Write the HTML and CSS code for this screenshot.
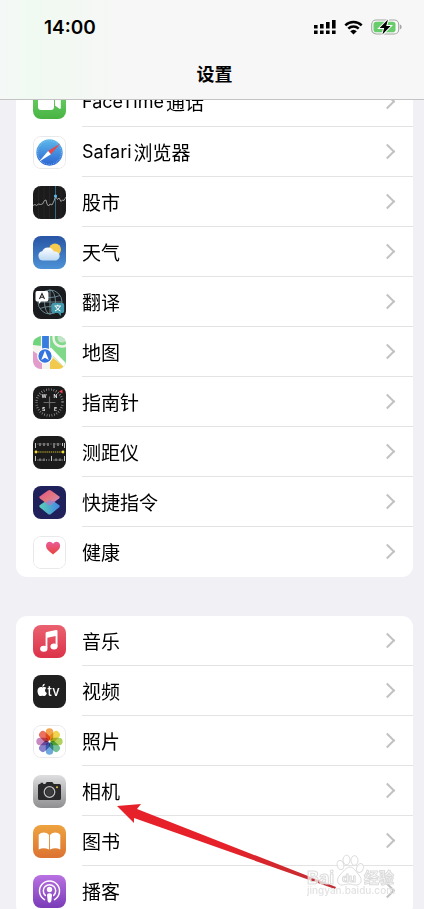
FILE: index.html
```html
<!DOCTYPE html>
<html lang="zh-CN">
<head>
    <meta charset="UTF-8">
    <meta name="viewport" content="width=device-width, initial-scale=1">
    <title>设置</title>
    <link rel="stylesheet" href="styles.css">
</head>
<body>
    <header class="header">
        <div class="status">
            <span class="time">14:00</span>
            <div class="status-icons">
                <svg class="signal" width="22" height="16" viewBox="0 0 22 16">
                    <path d="M0 6h3.600v3.400H0zM6 5h3.600v4.400H6zM12 3h3.600v6.400H12zM18 1h3.600v8.400H18z"/>
                    <path d="M0 11.600h3.600V15H0zM6 11.600h3.600V15H6zM12 11.600h3.600V15H12zM18 11.600h3.600V15H18z"/>
                </svg>
                <svg class="wifi" width="19" height="15" viewBox="0 0 19 15">
                    <path d="M1.300 5.300a12 12 0 0 1 16.400 0M4.300 8.600a7.600 7.600 0 0 1 10.400 0" fill="none" stroke="#000" stroke-width="2.500"/>
                    <path d="M9.500 14.600L6.200 11.200a4.800 4.800 0 0 1 6.600 0z"/>
                </svg>
                <svg class="battery" width="31" height="16" viewBox="0 0 31 16">
                    <rect x=".7" y="1" width="27" height="14" rx="4.500" fill="#fafafa" stroke="#a3a7a3" stroke-width="1.100"/>
                    <rect x="2.500" y="2.800" width="22" height="10.400" rx="2.800" fill="#66cc6c"/>
                    <path d="M28.900 5.600q1.800.4 1.800 2.400t-1.800 2.400z" fill="#a3a7a3"/>
                    <path d="M17 .6L8.600 9h4.600l-1.800 6.600L19.600 7h-4.400z" stroke="#fff" stroke-width="2" paint-order="stroke"/>
                </svg>
            </div>
        </div>
        <h1 class="title">设置</h1>
    </header>

    <main class="settings">
        <ul class="group">
            <li><a href="#">
                <svg class="icon" viewBox="0 0 33 33">
                    <defs><linearGradient id="gFace" x2="0" y2="1"><stop offset="0" stop-color="#75d873"/><stop offset="1" stop-color="#48b343"/></linearGradient></defs>
                    <rect width="33" height="33" fill="url(#gFace)"/>
                    <rect x="5" y="9" width="16" height="15" rx="3" fill="#fff"/>
                    <path d="M22 14l4-3.400q1.800-1 1.800 1v10q0 2-1.800 1L22 19.400z" fill="#fff"/>
                </svg>
                <span class="name"><b>FaceTime</b>通话</span>
            </a></li>
            <li><a href="#">
                <svg class="icon line" viewBox="0 0 33 33">
                    <defs><linearGradient id="gSaf" x2="0" y2="1"><stop offset="0" stop-color="#5cb8ea"/><stop offset="1" stop-color="#2c64d2"/></linearGradient></defs>
                    <rect width="33" height="33" fill="#fff"/>
                    <circle cx="16.500" cy="16.500" r="14" fill="url(#gSaf)"/>
                    <circle cx="16.500" cy="16.500" r="12.600" fill="none" stroke="#8cc6f2" stroke-width="1.200" stroke-dasharray=".6 1.300"/>
                    <path d="M28 7L15 15l3 3.400z" fill="#e5484c"/>
                    <path d="M5 26.500L15 15l3 3.400z" fill="#fff"/>
                </svg>
                <span class="name"><b>Safari</b>浏览器</span>
            </a></li>
            <li><a href="#">
                <svg class="icon" viewBox="0 0 33 33">
                    <rect width="33" height="33" fill="#1b1b1c"/>
                    <path d="M5.500 0v33M11 0v33M16.500 0v33M28 0v33" stroke="#28282a" stroke-width=".7"/>
                    <path d="M22.500 0v33" stroke="#2e6c86"/>
                    <path d="M0 19.500l2-1 1.500 1 2-1.500 2 .5 2-.5 2-3.500 1.500-.5 1 4 1.500 2 1.500-2 2 1 2-4 1.500-4.500 2 3 1.500-1.500 2 3.500 1.500-1.500 1.500.5L33 11" fill="none" stroke="#bdbdbd" stroke-width=".8"/>
                    <circle cx="22.500" cy="10" r="1.600" fill="#5abbe8"/>
                </svg>
                <span class="name">股市</span>
            </a></li>
            <li><a href="#">
                <svg class="icon" viewBox="0 0 33 33">
                    <defs>
                        <linearGradient id="gSky" x2="0" y2="1"><stop offset="0" stop-color="#2855a4"/><stop offset="1" stop-color="#4d91d6"/></linearGradient>
                        <linearGradient id="gCloud" x2="0" y2="1"><stop offset="0" stop-color="#fff"/><stop offset="1" stop-color="#bcd9f4"/></linearGradient>
                    </defs>
                    <rect width="33" height="33" fill="url(#gSky)"/>
                    <circle cx="22" cy="13.500" r="6" fill="#f6cb50"/>
                    <path d="M10 24.500a4.700 4.700 0 0 1-.8-9.300 6.200 6.200 0 0 1 11.600.4 4.600 4.600 0 0 1 2.400 8.900z" fill="url(#gCloud)"/>
                </svg>
                <span class="name">天气</span>
            </a></li>
            <li><a href="#">
                <svg class="icon" viewBox="0 0 33 33">
                    <rect width="33" height="33" fill="#1a1b1e"/>
                    <g fill="none" stroke="#6f8f98" stroke-width=".9">
                        <circle cx="17" cy="16" r="12"/>
                        <ellipse cx="17" cy="16" rx="5.500" ry="12"/>
                        <path d="M17 4v24M5 16h24M7 9.500q10 4 20 0M7 22.500q10-4 20 0"/>
                    </g>
                    <path d="M4 5h9.500q2 0 2 2v6.500q0 2-2 2H8l-2 2.500v-2.500H4q-1.500 0-1.500-2V7Q2.500 5 4 5z" fill="#fff"/>
                    <path d="M6.500 13L9 7.500l2.500 5.500M7.500 11.300h3" fill="none" stroke="#222" stroke-width="1.100"/>
                    <path d="M20 17h9.500q1.700 0 1.700 2v6q0 2-1.700 2H28v3l-3-3h-5q-1.800 0-1.800-2v-6q0-2 1.800-2z" fill="#4299ab"/>
                    <path d="M21.500 20h6.500M24.700 18.700V20M22.500 20.300q1.500 3.500 5 4.700M27 20.300q-1.500 3.500-5 4.700" fill="none" stroke="#fff"/>
                </svg>
                <span class="name">翻译</span>
            </a></li>
            <li><a href="#">
                <svg class="icon" viewBox="0 0 33 33">
                    <rect width="33" height="33" fill="#f4f3ee"/>
                    <path d="M15 0h18v33L15 15z" fill="#80d98a"/>
                    <path d="M0 4l7-4h2v10L0 9z" fill="#6ed47c"/>
                    <path d="M0 15l9 6v12H0z" fill="#e19ccc"/>
                    <path d="M17 19l16 14H17z" fill="#f0c94d"/>
                    <circle cx="29" cy="2" r="8.500" fill="none" stroke="#f2f2ec" stroke-width="2.500"/>
                    <circle cx="29" cy="2" r="4.500" fill="#c4e4c9"/>
                    <path d="M16.500 13L33 30" stroke="#fff" stroke-width="4"/>
                    <path d="M9 0h7v17H9z" fill="#377cdf"/>
                    <path d="M8.500 0v17M16.500 0v15" stroke="#fff" stroke-width="1.200"/>
                    <circle cx="12" cy="20" r="7.300" fill="#3474df" stroke="#fff" stroke-width="1.300"/>
                    <path d="M12 14.500l3.800 9.500-3.800-2.300L8.200 24z" fill="#fff"/>
                </svg>
                <span class="name">地图</span>
            </a></li>
            <li><a href="#">
                <svg class="icon" viewBox="0 0 33 33">
                    <rect width="33" height="33" fill="#1b1b1c"/>
                    <circle cx="16.500" cy="16.500" r="13" fill="none" stroke="#a9a9aa" stroke-width="2.400" stroke-dasharray=".6 1.900"/>
                    <path d="M16.500 10.500v12M10.500 16.500h12" stroke="#69696b" stroke-width="1.200"/>
                    <path d="M26 5.500l3.500-2v4z" fill="#f0404a"/>
                    <g class="compass-text">
                        <text x="8.500" y="12">W</text>
                        <text x="20.500" y="12">N</text>
                        <text x="9" y="25">S</text>
                        <text x="21" y="25">E</text>
                    </g>
                </svg>
                <span class="name">指南针</span>
            </a></li>
            <li><a href="#">
                <svg class="icon" viewBox="0 0 33 33">
                    <rect width="33" height="33" fill="#1b1b1c"/>
                    <path d="M2.500 7v5M7 7v3M11 7v3M15 7v3M21 7v5M25 7v3M29.500 7v3M31.500 7v5" stroke="#dcdcdc" stroke-width=".9"/>
                    <path d="M5 7v2M9 7v2M13 7v2M18 7v2M23 7v2M27 7v2" stroke="#777" stroke-width=".7"/>
                    <path d="M2.500 20v5M7 22.500V25M11 22.500V25M18.500 20v5M23 22.500V25M27 22.500V25M31.500 20v5" stroke="#dcdcdc" stroke-width=".9"/>
                    <path d="M5 23v2M9 23v2M13.500 23v2M16 23v2M21 23v2M25 23v2M29 23v2" stroke="#999" stroke-width=".7"/>
                    <path d="M3 16h27" stroke="#c9b42e" stroke-width="1" stroke-dasharray="1.400 .7"/>
                    <circle cx="3" cy="16" r="1.400" fill="#f2dc3c"/>
                    <circle cx="30" cy="16" r="1.400" fill="#f2dc3c"/>
                </svg>
                <span class="name">测距仪</span>
            </a></li>
            <li><a href="#">
                <svg class="icon" viewBox="0 0 33 33">
                    <defs>
                        <linearGradient id="gTop" x2="1" y2="1"><stop offset="0" stop-color="#e7508a"/><stop offset=".5" stop-color="#e2767e"/><stop offset="1" stop-color="#c58fd8"/></linearGradient>
                        <linearGradient id="gBot" x2="1" y2="0"><stop offset="0" stop-color="#5bd0b4"/><stop offset="1" stop-color="#4387e6"/></linearGradient>
                    </defs>
                    <rect width="33" height="33" fill="#20215a"/>
                    <path d="M15 13.500q1.500-1 3 0l8 5.500q1.500 1.200 0 2.400l-8 6.500q-1.500 1-3 0l-8-6.500q-1.500-1.200 0-2.400z" fill="url(#gBot)"/>
                    <path d="M15 4.500q1.500-1 3 0l8 5.700q1.500 1.200 0 2.400l-8 6q-1.500 1-3 0l-8-6q-1.500-1.200 0-2.400z" fill="url(#gTop)"/>
                    <path d="M12.500 16.800l4-2.600 5.500 1.500-4 3q-1.500 1-3 0z" fill="#9a86c4"/>
                </svg>
                <span class="name">快捷指令</span>
            </a></li>
            <li><a href="#">
                <svg class="icon line" viewBox="0 0 33 33">
                    <defs><linearGradient id="gHeart" x2="0" y2="1"><stop offset="0" stop-color="#ea5c9a"/><stop offset="1" stop-color="#e8453c"/></linearGradient></defs>
                    <rect width="33" height="33" fill="#fff"/>
                    <path d="M20.300 18.500c-4-3-7.500-5.500-7.500-9.200 0-5 5.700-5.500 7.500-2 1.800-3.500 7.500-3 7.500 2 0 3.700-3.500 6.200-7.500 9.200z" fill="url(#gHeart)"/>
                </svg>
                <span class="name">健康</span>
            </a></li>
        </ul>

        <ul class="group">
            <li><a href="#">
                <svg class="icon" viewBox="0 0 33 33">
                    <defs><linearGradient id="gMusic" x2="0" y2="1"><stop offset="0" stop-color="#ea6270"/><stop offset="1" stop-color="#dc3249"/></linearGradient></defs>
                    <rect width="33" height="33" fill="url(#gMusic)"/>
                    <path d="M12.600 8.200q0-1 1-1.200l9.600-2q1.300-.2 1.300 1V21h-1.900V11l-8.200 1.700V23h-1.800z" fill="#fff"/>
                    <ellipse cx="10.800" cy="23.800" rx="3.700" ry="3" fill="#fff"/>
                    <ellipse cx="21" cy="21.500" rx="3.600" ry="3" fill="#fff"/>
                </svg>
                <span class="name">音乐</span>
            </a></li>
            <li><a href="#">
                <svg class="icon" viewBox="0 0 33 33">
                    <rect width="33" height="33" fill="#202021"/>
                    <path d="M9.600 12.400c1.400-.8 3-.5 3.800.7-2 1.300-1.700 4.100.5 5-.7 1.700-1.500 3-2.600 3-.8 0-1-.4-1.900-.4s-1.200.4-1.900.4c-1.700 0-3-3-3-5.200 0-3.300 2.700-4.500 5.100-3.500z" fill="#fff"/>
                    <path d="M9.300 11.800c0-1.600.9-2.700 2.400-3 .1 1.600-.9 2.900-2.400 3z" fill="#fff"/>
                    <text class="tv-text" x="14.500" y="21">tv</text>
                </svg>
                <span class="name">视频</span>
            </a></li>
            <li><a href="#">
                <svg class="icon line" viewBox="0 0 33 33">
                    <rect width="33" height="33" fill="#fff"/>
                    <g class="petals">
                        <rect x="12.500" y="2.500" width="8" height="13" rx="4" fill="#f29a3c"/>
                        <rect x="12.500" y="2.500" width="8" height="13" rx="4" fill="#ecd03e" transform="rotate(45 16.500 16.500)"/>
                        <rect x="12.500" y="2.500" width="8" height="13" rx="4" fill="#a9cc4a" transform="rotate(90 16.500 16.500)"/>
                        <rect x="12.500" y="2.500" width="8" height="13" rx="4" fill="#62bb8a" transform="rotate(135 16.500 16.500)"/>
                        <rect x="12.500" y="2.500" width="8" height="13" rx="4" fill="#5f9fd8" transform="rotate(180 16.500 16.500)"/>
                        <rect x="12.500" y="2.500" width="8" height="13" rx="4" fill="#7b74c4" transform="rotate(225 16.500 16.500)"/>
                        <rect x="12.500" y="2.500" width="8" height="13" rx="4" fill="#c27cb8" transform="rotate(270 16.500 16.500)"/>
                        <rect x="12.500" y="2.500" width="8" height="13" rx="4" fill="#e8604f" transform="rotate(315 16.500 16.500)"/>
                    </g>
                </svg>
                <span class="name">照片</span>
            </a></li>
            <li><a href="#">
                <svg class="icon" viewBox="0 0 33 33">
                    <defs><linearGradient id="gCam" x2="0" y2="1"><stop offset="0" stop-color="#dedee0"/><stop offset="1" stop-color="#8f8f92"/></linearGradient></defs>
                    <rect width="33" height="33" fill="url(#gCam)"/>
                    <path d="M6.500 9h5.700l1.500-2h5.600l1.500 2h5.700q1.500 0 1.500 1.500v13q0 1.500-1.500 1.500h-20Q5 25 5 23.500v-13Q5 9 6.500 9z" fill="#29292b"/>
                    <path d="M7.500 7.800h2.700V9H7.500z" fill="#29292b"/>
                    <circle cx="16.500" cy="17" r="5.300" fill="none" stroke="#c3c3c6" stroke-width="1.200"/>
                    <circle cx="16.500" cy="17" r="3.700" fill="#3c3c3f"/>
                    <circle cx="24" cy="12.300" r="1" fill="#f1c64a"/>
                </svg>
                <span class="name">相机</span>
            </a></li>
            <li><a href="#">
                <svg class="icon" viewBox="0 0 33 33">
                    <defs><linearGradient id="gBook" x2="0" y2="1"><stop offset="0" stop-color="#eda33f"/><stop offset="1" stop-color="#dd7232"/></linearGradient></defs>
                    <rect width="33" height="33" fill="url(#gBook)"/>
                    <path d="M16.100 10q-1.500-2.500-5-2.500T5.700 9.700v14.800q4.800-2.300 10.400 0zM17 10q1.500-2.500 5-2.500t5.300 2.200v14.800q-4.700-2.300-10.300 0z" fill="#fff"/>
                </svg>
                <span class="name">图书</span>
            </a></li>
            <li><a href="#">
                <svg class="icon" viewBox="0 0 33 33">
                    <defs><linearGradient id="gPod" x2="0" y2="1"><stop offset="0" stop-color="#b971e2"/><stop offset="1" stop-color="#7a3bb8"/></linearGradient></defs>
                    <rect width="33" height="33" fill="url(#gPod)"/>
                    <path d="M11.500 24.600a10 10 0 1 1 10 0M12.300 20.400a6.200 6.200 0 1 1 8.400 0" fill="none" stroke="#fff" stroke-width="1.500" stroke-linecap="round"/>
                    <circle cx="16.500" cy="14.500" r="2.700" fill="#fff"/>
                    <path d="M14 20q0-1.800 2.500-1.800T19 20l-.7 6q-.3 1.700-1.800 1.700t-1.800-1.700z" fill="#fff"/>
                </svg>
                <span class="name">播客</span>
            </a></li>
        </ul>
    </main>

    <!-- 指向“相机”的箭头 -->
    <svg class="arrow" width="220" height="88" viewBox="0 0 220 88">
        <defs><linearGradient id="gArrow" x2="1" y2="0"><stop offset=".5" stop-color="#e62129"/><stop offset="1" stop-color="#bd3034"/></linearGradient></defs>
        <path d="M0 3L24 1L20 6L219 84L218 86L17 15L17 20z" fill="url(#gArrow)"/>
    </svg>

    <!-- 水印 -->
    <svg class="watermark" width="92" height="46" viewBox="0 0 92 46">
        <g class="mark">
            <ellipse cx="33.500" cy="13" rx="3.300" ry="4.600" transform="rotate(-15 33.500 13)"/>
            <ellipse cx="39.500" cy="8" rx="3.500" ry="4.800"/>
            <ellipse cx="47.500" cy="8.500" rx="3.500" ry="4.800"/>
            <ellipse cx="53" cy="16" rx="3.300" ry="4.600" transform="rotate(20 53 16)"/>
            <path d="M43 15c4 0 6 5 9 8 4 5 2 10-3 10-3 0-4-1-7-1s-4 1-7 1c-5 0-6-6-2-10 3-3 6-8 10-8z"/>
            <text class="mark-logo" x="0" y="32">Bai</text>
            <text class="mark-du" x="35" y="30">du</text>
            <text class="mark-cn" x="57" y="31">经验</text>
        </g>
        <text class="mark-url" x="0" y="42">jingyan.baidu.com</text>
    </svg>
</body>
</html>
```

FILE: styles.css
```css
* {
    margin: 0;
    padding: 0;
    list-style: none;
    box-sizing: border-box;
}
body {
    height: 100vh;
    overflow: hidden;
    position: relative;
    background: #f0f0f5;
    color: #000;
    font-family: Inter, "Noto Sans CJK SC", sans-serif;
}

/* 顶部栏 */
.header {
    position: fixed;
    z-index: 2;
    top: 0;
    left: 0;
    right: 0;
    height: 100px;
    padding: 16px 22px 0 27px;
    border-bottom: 1px solid #c3c3c4;
    background: linear-gradient(90deg, #f5f8f7 0, #f0faf1 32px, #f3f8f3 72px, #f7f7f7 130px);
}
.status {
    display: flex;
    justify-content: space-between;
    align-items: center;
    height: 22px;
    padding-left: 17px;
}
.time {
    font-size: 19px;
    font-weight: 600;
}
.status-icons {
    display: flex;
    align-items: center;
    gap: 8px;
}
.title {
    margin-top: 24px;
    line-height: 26px;
    font-size: 18px;
    font-weight: 700;
    text-align: center;
}

/* 列表 */
.settings {
    height: 100vh;
    overflow: hidden;
    padding: 77px 11px 0 16px;
}
.group {
    margin-bottom: 39px;
    background: #fff;
    border-radius: 11px;
    overflow: hidden;
}
.group a {
    display: flex;
    align-items: center;
    height: 50px;
    padding-left: 17px;
    color: #000;
    text-decoration: none;
}
.icon {
    flex: none;
    width: 33px;
    height: 33px;
    margin-right: 16px;
    border-radius: 8px;
}
.icon.line {
    border: 1px solid #e9e9eb;
}
.name {
    flex: 1;
    display: flex;
    align-items: center;
    height: 50px;
    border-bottom: 1px solid #e3e3e5;
    font-size: 19px;
}
.name b {
    margin-right: 2px;
    font-size: 18px;
    font-weight: 400;
}
.name::after {
    content: "";
    width: 9px;
    height: 9px;
    margin-left: auto;
    margin-right: 20px;
    border-top: 2px solid #c2c2c5;
    border-right: 2px solid #c2c2c5;
    transform: rotate(45deg);
}
.group li:last-child .name {
    border-bottom-color: transparent;
}

/* 图标里的文字 */
.compass-text {
    fill: #e6e6e6;
    font-size: 5px;
    font-weight: 700;
}
.tv-text {
    fill: #fff;
    font-size: 13px;
    font-weight: 500;
}
.petals rect {
    mix-blend-mode: multiply;
    opacity: .9;
}

.arrow {
    position: absolute;
    z-index: 3;
    left: 117px;
    top: 803px;
}

/* 水印 */
.watermark {
    position: absolute;
    z-index: 4;
    right: 25px;
    top: 852px;
}
.mark {
    fill: rgba(255, 255, 255, .7);
    stroke: #dcdcdc;
    stroke-width: 1px;
    font-weight: 700;
}
.mark-logo {
    font-size: 18px;
}
.mark-du {
    font-size: 11px;
}
.mark-cn {
    font-size: 15px;
}
.mark-url {
    fill: #e2e2e2;
    font-size: 10px;
    font-weight: 500;
}
```
